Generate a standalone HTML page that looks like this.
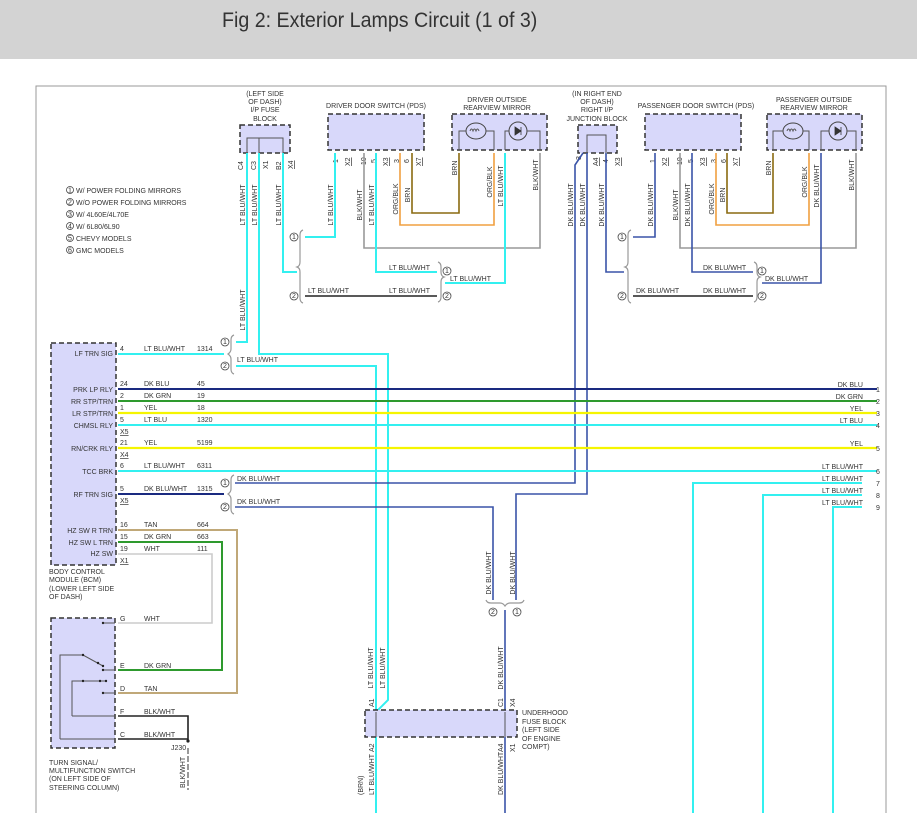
<!DOCTYPE html>
<html><head><meta charset="utf-8"><style>
html,body{margin:0;padding:0;background:#fff;width:917px;height:813px;overflow:hidden}
#hdr{position:absolute;left:0;top:0;width:917px;height:59px;background:#d3d3d3}
#hdr span{position:absolute;left:222px;top:9px;font-family:"Liberation Sans",sans-serif;font-size:21px;color:#333;transform:scaleX(0.935);transform-origin:0 0;white-space:nowrap}
svg{position:absolute;left:0;top:0}
text{font-family:"Liberation Sans",sans-serif;font-size:7px;fill:#333}
.box{fill:#d8d8fa;stroke:#333;stroke-width:1.5;stroke-dasharray:5 3}
.c{fill:none;stroke:#33f0f0;stroke-width:2}
.db{fill:none;stroke:#3a54a8;stroke-width:1.6}
.nv{fill:none;stroke:#1a2a80;stroke-width:2}
.gr{fill:none;stroke:#2e9a2e;stroke-width:2}
.ye{fill:none;stroke:#f5f500;stroke-width:2.2}
.or{fill:none;stroke:#f0a040;stroke-width:1.6}
.br{fill:none;stroke:#8a6a10;stroke-width:1.6}
.gy{fill:none;stroke:#999;stroke-width:1.6}
.tn{fill:none;stroke:#c0a878;stroke-width:2}
.wh{fill:none;stroke:#ccc;stroke-width:1.6}
.bk{fill:none;stroke:#222;stroke-width:1.6}
.k{fill:none;stroke:#555;stroke-width:1}
.ci{fill:#fff;stroke:#444;stroke-width:0.8}
</style></head><body>
<div id="hdr"><span>Fig 2: Exterior Lamps Circuit (1 of 3)</span></div>
<svg width="917" height="813" viewBox="0 0 917 813">
<path d="M36 813 V86 H886 V813" fill="none" stroke="#999" stroke-width="1"/>
<g>
<circle class="ci" cx="70" cy="190" r="3.5"/><text x="68" y="192.5" font-size="5">1</text><text x="76" y="193">W/ POWER FOLDING MIRRORS</text>
<circle class="ci" cx="70" cy="202" r="3.5"/><text x="68" y="204.5" font-size="5">2</text><text x="76" y="205">W/O POWER FOLDING MIRRORS</text>
<circle class="ci" cx="70" cy="214" r="3.5"/><text x="68" y="216.5" font-size="5">3</text><text x="76" y="217">W/ 4L60E/4L70E</text>
<circle class="ci" cx="70" cy="226" r="3.5"/><text x="68" y="228.5" font-size="5">4</text><text x="76" y="229">W/ 6L80/6L90</text>
<circle class="ci" cx="70" cy="238" r="3.5"/><text x="68" y="240.5" font-size="5">5</text><text x="76" y="241">CHEVY MODELS</text>
<circle class="ci" cx="70" cy="250" r="3.5"/><text x="68" y="252.5" font-size="5">6</text><text x="76" y="253">GMC MODELS</text>
</g>
<g text-anchor="middle">
<text x="265" y="96">(LEFT SIDE</text><text x="265" y="104">OF DASH)</text><text x="265" y="112">I/P FUSE</text><text x="265" y="121">BLOCK</text>
<text x="376" y="108">DRIVER DOOR SWITCH (PDS)</text>
<text x="497" y="102">DRIVER OUTSIDE</text><text x="497" y="110">REARVIEW MIRROR</text>
<text x="597" y="96">(IN RIGHT END</text><text x="597" y="104">OF DASH)</text><text x="597" y="112">RIGHT I/P</text><text x="597" y="121">JUNCTION BLOCK</text>
<text x="696" y="108">PASSENGER DOOR SWITCH (PDS)</text>
<text x="814" y="102">PASSENGER OUTSIDE</text><text x="814" y="110">REARVIEW MIRROR</text>
</g>
<rect class="box" x="240" y="125" width="50" height="28"/>
<path class="k" d="M247 153 V138 H283 V153 M259 138 V153"/>
<rect class="box" x="328" y="114" width="96" height="36"/>
<rect class="box" x="452" y="114" width="95" height="36"/>
<ellipse cx="476" cy="131" rx="10" ry="8" fill="none" stroke="#444"/><path class="k" d="M459 150 V131 H466 M486 131 H494 V150 M470 131 q1.5 -4 3 0 q1.5 -4 3 0 q1.5 -4 3 0"/>
<circle cx="518" cy="131" r="9" fill="none" stroke="#444"/><path class="k" d="M505 150 V131 H509 M527 131 H540 V150"/><path d="M515 127 V135 L521 131 Z M521 127 V135" fill="#333" stroke="#333" stroke-width="0.8"/>
<rect class="box" x="578" y="125" width="39" height="28"/>
<path class="k" d="M587 153 V135 H606 V153"/>
<rect class="box" x="645" y="114" width="96" height="36"/>
<rect class="box" x="767" y="114" width="95" height="36"/>
<ellipse cx="793" cy="131" rx="10" ry="8" fill="none" stroke="#444"/><path class="k" d="M773 150 V131 H783 M803 131 H809 V150 M787 131 q1.5 -4 3 0 q1.5 -4 3 0 q1.5 -4 3 0"/>
<circle cx="838" cy="131" r="9" fill="none" stroke="#444"/><path class="k" d="M821 150 V131 H829 M847 131 H856 V150"/><path d="M835 127 V135 L841 131 Z M841 127 V135" fill="#333" stroke="#333" stroke-width="0.8"/>
<g font-size="6.5">
<text transform="translate(243,170) rotate(-90)">C4</text><text transform="translate(256,170) rotate(-90)">C3</text><text transform="translate(268,169) rotate(-90)">X1</text><text transform="translate(281,170) rotate(-90)">B2</text><text transform="translate(293,169) rotate(-90)" text-decoration="underline">X4</text>
<text transform="translate(338,163) rotate(-90)">1</text><text transform="translate(350,166) rotate(-90)" text-decoration="underline">X2</text><text transform="translate(366,165) rotate(-90)">10</text><text transform="translate(376,163) rotate(-90)">5</text><text transform="translate(388,166) rotate(-90)" text-decoration="underline">X3</text><text transform="translate(399,163) rotate(-90)">3</text><text transform="translate(409,163) rotate(-90)">6</text><text transform="translate(421,166) rotate(-90)" text-decoration="underline">X7</text>
<text transform="translate(581,160) rotate(-90)">3</text><text transform="translate(598,166) rotate(-90)" text-decoration="underline">A4</text><text transform="translate(608,163) rotate(-90)">4</text><text transform="translate(620,166) rotate(-90)" text-decoration="underline">X3</text>
<text transform="translate(655,163) rotate(-90)">1</text><text transform="translate(667,166) rotate(-90)" text-decoration="underline">X2</text><text transform="translate(682,165) rotate(-90)">10</text><text transform="translate(693,163) rotate(-90)">5</text><text transform="translate(705,166) rotate(-90)" text-decoration="underline">X3</text><text transform="translate(716,163) rotate(-90)">3</text><text transform="translate(726,163) rotate(-90)">6</text><text transform="translate(738,166) rotate(-90)" text-decoration="underline">X7</text>
</g>
<path class="br" d="M412 153 V213 H459 V153"/>
<path class="or" d="M400 153 V225 H494 V153"/>
<path class="gy" d="M364 153 V248 H540 V153"/>
<path class="c" d="M335 153 V237 H305"/>
<path class="c" d="M283 153 V272 H297"/>
<path class="c" d="M376 153 V272 H437"/>
<path class="c" d="M505 153 V283 H445"/>
<path class="bk" d="M305 296 H437" stroke-width="1.2"/>
<path class="c" d="M247 153 V342 H236"/>
<path class="c" d="M259 153 V354 H388 V700 L376 712"/>
<path class="c" d="M236 366 H376 V813"/>
<g fill="none" stroke="#999" stroke-width="1.2">
<path d="M303 230 Q300 231 300 235 V262 Q300 266 297 267 Q300 268 300 272 V298 Q300 302 303 303"/>
<path d="M438 262 Q441 263 441 267 V272 Q441 276 444 277 Q441 278 441 282 V297 Q441 301 438 302"/>
<path d="M631 230 Q628 231 628 235 V262 Q628 266 625 267 Q628 268 628 272 V298 Q628 302 631 303"/>
<path d="M754 262 Q757 263 757 267 V272 Q757 276 760 277 Q757 278 757 282 V297 Q757 301 754 302"/>
<path d="M234 335 Q231 336 231 340 V349 Q231 352 228 354 Q231 356 231 359 V369 Q231 373 234 374"/>
<path d="M234 475 Q231 476 231 480 V489 Q231 492 228 494 Q231 496 231 499 V509 Q231 513 234 514"/>
<path d="M486 600 Q487 603 491 603 H500 Q503 603 505 606 Q507 603 510 603 H519 Q523 603 524 600"/>
</g>
<g font-size="5">
<circle class="ci" cx="294" cy="237" r="4"/><text x="292" y="239">1</text>
<circle class="ci" cx="294" cy="296" r="4"/><text x="292" y="298">2</text>
<circle class="ci" cx="447" cy="271" r="4"/><text x="445" y="273">1</text>
<circle class="ci" cx="447" cy="296" r="4"/><text x="445" y="298">2</text>
<circle class="ci" cx="622" cy="237" r="4"/><text x="620" y="239">1</text>
<circle class="ci" cx="622" cy="296" r="4"/><text x="620" y="298">2</text>
<circle class="ci" cx="762" cy="271" r="4"/><text x="760" y="273">1</text>
<circle class="ci" cx="762" cy="296" r="4"/><text x="760" y="298">2</text>
<circle class="ci" cx="225" cy="342" r="4"/><text x="223" y="344">1</text>
<circle class="ci" cx="225" cy="366" r="4"/><text x="223" y="368">2</text>
<circle class="ci" cx="225" cy="483" r="4"/><text x="223" y="485">1</text>
<circle class="ci" cx="225" cy="507" r="4"/><text x="223" y="509">2</text>
<circle class="ci" cx="493" cy="612" r="4"/><text x="491" y="614">2</text>
<circle class="ci" cx="517" cy="612" r="4"/><text x="515" y="614">1</text>
</g>
<path class="br" d="M727 153 V213 H773 V153"/>
<path class="or" d="M716 153 V225 H809 V153"/>
<path class="gy" d="M680 153 V248 H856 V153"/>
<path class="db" d="M655 153 V237 H633"/>
<path class="db" d="M606 153 V272 H624"/>
<path class="db" d="M692 153 V272 H753"/>
<path class="db" d="M821 153 V283 H762"/>
<path class="bk" d="M633 296 H753" stroke-width="1.2"/>
<path class="db" d="M583 153 L575 165 V483 H235"/>
<path class="db" d="M587 153 V494 H516 V600"/>
<path class="db" d="M235 507 H493 V600"/>
<path class="db" d="M505 610 V813" stroke-width="2"/>
<g text-anchor="middle">
<text transform="translate(245,205) rotate(-90)">LT BLU/WHT</text>
<text transform="translate(257,205) rotate(-90)">LT BLU/WHT</text>
<text transform="translate(281,205) rotate(-90)">LT BLU/WHT</text>
<text transform="translate(245,310) rotate(-90)">LT BLU/WHT</text>
<text transform="translate(333,205) rotate(-90)">LT BLU/WHT</text>
<text transform="translate(362,205) rotate(-90)">BLK/WHT</text>
<text transform="translate(374,205) rotate(-90)">LT BLU/WHT</text>
<text transform="translate(398,199) rotate(-90)">ORG/BLK</text>
<text transform="translate(410,195) rotate(-90)">BRN</text>
<text transform="translate(457,168) rotate(-90)">BRN</text>
<text transform="translate(492,182) rotate(-90)">ORG/BLK</text>
<text transform="translate(503,186) rotate(-90)">LT BLU/WHT</text>
<text transform="translate(538,175) rotate(-90)">BLK/WHT</text>
<text transform="translate(573,205) rotate(-90)">DK BLU/WHT</text>
<text transform="translate(585,205) rotate(-90)">DK BLU/WHT</text>
<text transform="translate(604,205) rotate(-90)">DK BLU/WHT</text>
<text transform="translate(653,205) rotate(-90)">DK BLU/WHT</text>
<text transform="translate(678,205) rotate(-90)">BLK/WHT</text>
<text transform="translate(690,205) rotate(-90)">DK BLU/WHT</text>
<text transform="translate(714,199) rotate(-90)">ORG/BLK</text>
<text transform="translate(725,195) rotate(-90)">BRN</text>
<text transform="translate(771,168) rotate(-90)">BRN</text>
<text transform="translate(807,182) rotate(-90)">ORG/BLK</text>
<text transform="translate(819,186) rotate(-90)">DK BLU/WHT</text>
<text transform="translate(854,175) rotate(-90)">BLK/WHT</text>
<text transform="translate(491,573) rotate(-90)">DK BLU/WHT</text>
<text transform="translate(515,573) rotate(-90)">DK BLU/WHT</text>
<text transform="translate(373,668) rotate(-90)">LT BLU/WHT</text>
<text transform="translate(385,668) rotate(-90)">LT BLU/WHT</text>
<text transform="translate(503,668) rotate(-90)">DK BLU/WHT</text>
</g>
<text x="389" y="270">LT BLU/WHT</text>
<text x="450" y="281">LT BLU/WHT</text>
<text x="308" y="293">LT BLU/WHT</text><text x="389" y="293">LT BLU/WHT</text>
<text x="703" y="270">DK BLU/WHT</text>
<text x="765" y="281">DK BLU/WHT</text>
<text x="636" y="293">DK BLU/WHT</text><text x="703" y="293">DK BLU/WHT</text>
<text x="237" y="362">LT BLU/WHT</text>
<text x="237" y="481">DK BLU/WHT</text>
<text x="237" y="504">DK BLU/WHT</text>
<rect class="box" x="51" y="343" width="65" height="222"/>
<g text-anchor="end">
<text x="113" y="356">LF TRN SIG</text>
<text x="113" y="392">PRK LP RLY</text>
<text x="113" y="404">RR STP/TRN</text>
<text x="113" y="416">LR STP/TRN</text>
<text x="113" y="428">CHMSL RLY</text>
<text x="113" y="451">RN/CRK RLY</text>
<text x="113" y="474">TCC BRK</text>
<text x="113" y="497">RF TRN SIG</text>
<text x="113" y="533">HZ SW R TRN</text>
<text x="113" y="545">HZ SW L TRN</text>
<text x="113" y="556">HZ SW</text>
</g>
<text x="49" y="574">BODY CONTROL</text><text x="49" y="582">MODULE (BCM)</text><text x="49" y="591">(LOWER LEFT SIDE</text><text x="49" y="599">OF DASH)</text>
<path class="c" d="M118 354 H224"/>
<path class="nv" d="M118 389 H877"/>
<path class="gr" d="M118 401 H877"/>
<path class="ye" d="M118 413 H877"/>
<path class="c" d="M118 425 H877"/>
<path class="ye" d="M118 448 H877"/>
<path class="c" d="M118 471 H877"/>
<path class="nv" d="M118 494 H224" stroke-width="1.6"/>
<path class="c" d="M693 813 V483 H862 M763 813 V495 H862 M833 813 V507 H862"/>
<path class="tn" d="M118 530 H237 V693 H118"/>
<path class="gr" d="M118 542 H222 V670 H118"/>
<path class="wh" d="M118 554 H212 V623 H118"/>
<g>
<text x="120" y="351">4</text><text x="144" y="351">LT BLU/WHT</text><text x="197" y="351">1314</text>
<text x="120" y="386">24</text><text x="144" y="386">DK BLU</text><text x="197" y="386">45</text>
<text x="120" y="398">2</text><text x="144" y="398">DK GRN</text><text x="197" y="398">19</text>
<text x="120" y="410">1</text><text x="144" y="410">YEL</text><text x="197" y="410">18</text>
<text x="120" y="422">5</text><text x="144" y="422">LT BLU</text><text x="197" y="422">1320</text>
<text x="120" y="434" text-decoration="underline">X5</text>
<text x="120" y="445">21</text><text x="144" y="445">YEL</text><text x="197" y="445">5199</text>
<text x="120" y="457" text-decoration="underline">X4</text>
<text x="120" y="468">6</text><text x="144" y="468">LT BLU/WHT</text><text x="197" y="468">6311</text>
<text x="120" y="491">5</text><text x="144" y="491">DK BLU/WHT</text><text x="197" y="491">1315</text>
<text x="120" y="503" text-decoration="underline">X5</text>
<text x="120" y="527">16</text><text x="144" y="527">TAN</text><text x="197" y="527">664</text>
<text x="120" y="539">15</text><text x="144" y="539">DK GRN</text><text x="197" y="539">663</text>
<text x="120" y="551">19</text><text x="144" y="551">WHT</text><text x="197" y="551">111</text>
<text x="120" y="563" text-decoration="underline">X1</text>
</g>
<g text-anchor="end">
<text x="863" y="387">DK BLU</text><text x="863" y="399">DK GRN</text><text x="863" y="411">YEL</text><text x="863" y="423">LT BLU</text>
<text x="863" y="446">YEL</text><text x="863" y="469">LT BLU/WHT</text><text x="863" y="481">LT BLU/WHT</text><text x="863" y="493">LT BLU/WHT</text><text x="863" y="505">LT BLU/WHT</text>
</g>
<g fill="#333"><text x="876" y="392">1</text><text x="876" y="404">2</text><text x="876" y="416">3</text><text x="876" y="428">4</text><text x="876" y="451">5</text><text x="876" y="474">6</text><text x="876" y="486">7</text><text x="876" y="498">8</text><text x="876" y="510">9</text></g>
<rect class="box" x="51" y="618" width="64" height="130"/>
<path class="k" d="M103 623 H115 M103 670 H115 M103 693 H115 M60 739 H115 M60 739 V655 H83 L103 666 M72 716 V681 H106 M72 716 H115" stroke="#444"/>
<g fill="#222"><circle cx="103" cy="623" r="1.2"/><circle cx="103" cy="670" r="1.2"/><circle cx="103" cy="693" r="1.2"/><circle cx="83" cy="655" r="1.2"/><circle cx="98" cy="663" r="1.2"/><circle cx="103" cy="666" r="1.2"/><circle cx="83" cy="681" r="1.2"/><circle cx="100" cy="681" r="1.2"/><circle cx="106" cy="681" r="1.2"/></g>
<text x="120" y="621">G</text><text x="144" y="621">WHT</text>
<text x="120" y="668">E</text><text x="144" y="668">DK GRN</text>
<text x="120" y="691">D</text><text x="144" y="691">TAN</text>
<text x="120" y="714">F</text><text x="144" y="714">BLK/WHT</text>
<text x="120" y="737">C</text><text x="144" y="737">BLK/WHT</text>
<path class="bk" d="M118 716 H188 V741 M118 739 H188"/>
<circle cx="188" cy="741" r="1.6" fill="#222"/>
<path d="M188 748 V790" stroke="#333" stroke-width="1" stroke-dasharray="6 2"/>
<text x="171" y="750">J230</text>
<text transform="translate(185,788) rotate(-90)">BLK/WHT</text>
<text x="49" y="765">TURN SIGNAL/</text><text x="49" y="773">MULTIFUNCTION SWITCH</text><text x="49" y="781">(ON LEFT SIDE OF</text><text x="49" y="790">STEERING COLUMN)</text>
<rect class="box" x="365" y="710" width="152" height="27"/>
<path class="k" d="M376 712 V737 M505 712 V737"/>
<text transform="translate(374,707) rotate(-90)">A1</text><text transform="translate(374,752) rotate(-90)">A2</text>
<text transform="translate(503,707) rotate(-90)">C1</text><text transform="translate(515,707) rotate(-90)">X4</text>
<text transform="translate(503,752) rotate(-90)">A4</text><text transform="translate(515,752) rotate(-90)">X1</text>
<text x="522" y="715">UNDERHOOD</text><text x="522" y="724">FUSE BLOCK</text><text x="522" y="732">(LEFT SIDE</text><text x="522" y="741">OF ENGINE</text><text x="522" y="749">COMPT)</text>
<text transform="translate(363,795) rotate(-90)">(BRN)</text><text transform="translate(374,795) rotate(-90)">LT BLU/WHT</text>
<text transform="translate(503,795) rotate(-90)">DK BLU/WHT</text>
</svg>
</body></html>
